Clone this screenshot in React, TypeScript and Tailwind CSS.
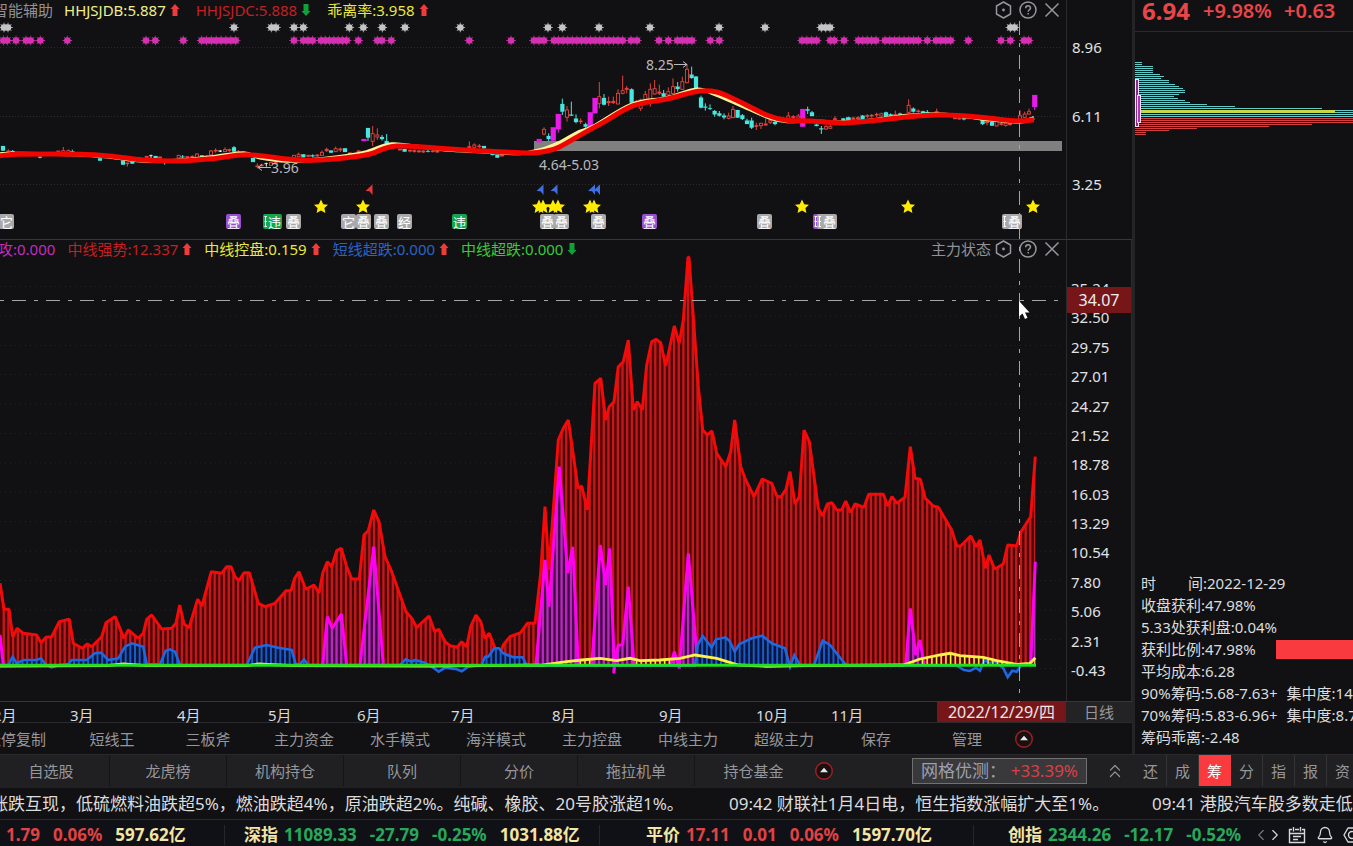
import React from 'react';
import { Bell, ChevronLeft, ChevronRight, ChevronsUp } from 'lucide-react';

type Pt = [number, number];
type Kind = 'r' | 'c' | 'm' | 'w';
type Candle = [number, number, number, number, number, Kind];

const STEP = 4.6875;
const LAST_X = 1035;
const BASE = 665;

// Series are stored in thirds of a pixel, relative to the segment origin.
const seg = (ox: number, oy: number, pts: Pt[]): Pt[] => pts.map(([x, y]) => [ox + x / 3, oy + y / 3]);

const trend: Pt[] = [
  ...seg(0, 480, [[0, 310], [12, 388], [27, 388], [38, 470], [52, 445], [70, 460], [110, 465], [123, 488], [138, 472], [155, 470], [178, 425], [208, 418], [220, 490], [247, 505], [262, 492], [275, 500], [305, 470], [318, 428], [345, 410], [372, 475], [385, 450], [415, 475], [430, 460], [440, 418], [455, 405], [485, 447], [515, 445], [528, 430], [539, 375], [552, 432], [567, 443], [593, 358], [606, 378], [634, 275], [665, 280], [680, 260], [693, 260], [705, 290], [717, 302], [732, 278], [748, 278], [775, 370], [795, 380], [825, 370], [858, 332], [873, 332], [884, 295], [897, 275], [917, 328], [942, 315], [957, 340], [968, 280], [982, 245], [995, 260], [1010, 212], [1024, 205], [1040, 260], [1055, 297], [1078, 297], [1092, 165], [1105, 152], [1121, 90], [1137, 125], [1155, 230], [1175, 275], [1218, 395], [1235, 415], [1250, 443], [1287, 408], [1304, 455], [1316, 448]]),
  ...seg(400, 240, [[135, 1205], [150, 1217], [172, 1222], [185, 1205], [200, 1220], [212, 1160], [228, 1125], [242, 1145], [255, 1195], [268, 1180], [285, 1225], [296, 1248], [310, 1215], [330, 1190], [362, 1178], [382, 1150], [405, 1150], [422, 1000], [435, 800], [447, 990], [475, 600], [490, 565], [505, 540], [534, 745], [545, 738], [562, 810], [585, 430], [602, 415], [617, 540], [628, 500], [642, 485], [655, 380], [670, 365], [685, 300], [700, 510], [712, 485], [727, 510], [740, 375], [755, 305], [768, 298], [782, 308], [797, 378], [823, 258], [838, 310], [850, 240], [864, 52], [867, 52], [895, 440], [908, 570], [922, 585], [936, 573], [950, 640], [977, 680], [992, 635], [1004, 540]]),
  ...seg(740, 400, [[2, 200], [15, 235], [42, 290], [67, 237], [95, 250], [110, 288], [122, 292], [138, 268], [150, 215], [165, 312], [178, 290], [192, 90], [208, 125], [235, 325], [248, 348], [262, 312], [276, 308], [290, 330], [305, 330], [317, 303], [332, 338], [345, 312], [372, 322], [386, 283], [430, 283], [443, 318], [456, 290], [470, 310], [495, 292], [511, 140], [525, 235], [541, 238], [556, 295], [580, 318], [595, 322], [635, 390], [650, 438], [662, 438], [692, 408], [708, 440], [720, 420], [736, 505], [747, 465], [764, 508], [790, 492], [803, 435], [830, 438], [843, 395], [872, 350], [886, 170]]),
];

const attack: Pt[][] = [
  seg(0, 480, [[0, 465], [10, 555]]),
  seg(0, 480, [[968, 555], [982, 410], [997, 445], [1024, 402], [1040, 555]]),
  seg(0, 480, [[1080, 555], [1121, 200], [1150, 555]]),
  seg(400, 240, [[408, 1275], [435, 960], [447, 1100], [478, 680], [503, 1000], [518, 920], [535, 1275]]),
  seg(400, 240, [[575, 1275], [601, 915], [617, 1035], [629, 925], [643, 1275], [641, 1300], [647, 1250], [655, 1215], [668, 1215], [685, 1040], [702, 1275]]),
  seg(400, 240, [[812, 1275], [823, 1235], [838, 1285], [865, 940], [893, 1275]]),
  seg(740, 400, [[497, 795], [511, 625], [527, 765], [540, 720], [552, 795]]),
  seg(740, 400, [[872, 795], [886, 485]]),
];

const shortDip: Pt[] = [
  ...seg(0, 480, [[0, 555], [25, 555], [38, 530], [50, 550], [70, 540], [110, 540], [123, 535], [138, 555], [155, 562], [175, 556], [205, 552], [215, 540], [260, 540], [285, 520], [303, 518], [325, 540], [355, 535], [375, 500], [395, 490], [430, 500], [440, 553], [480, 553], [497, 512], [510, 508], [525, 515], [540, 555], [740, 555], [765, 503], [800, 495], [835, 503], [875, 510], [887, 553], [900, 553], [912, 538], [925, 555], [1200, 555], [1217, 538], [1235, 545], [1245, 540], [1275, 548], [1300, 563], [1316, 575], [1335, 563]]),
  ...seg(400, 240, [[170, 1288], [185, 1294], [205, 1280], [245, 1275], [255, 1250], [265, 1250], [283, 1225], [296, 1225], [310, 1240], [340, 1252], [368, 1252], [380, 1277], [885, 1277], [893, 1215], [908, 1188], [935, 1222], [948, 1198], [977, 1192], [990, 1205], [1004, 1235], [1018, 1212]]),
  ...seg(740, 400, [[0, 732], [35, 715], [67, 707], [95, 730], [135, 745], [150, 800], [163, 765], [180, 795], [222, 795], [248, 722], [270, 735], [310, 785], [320, 796], [650, 797], [672, 810], [690, 813], [708, 803], [720, 812], [733, 780], [748, 790], [762, 782], [790, 805], [803, 832], [817, 812], [830, 815], [842, 797]]),
];

const control: Pt[] = [
  ...seg(0, 480, [[0, 558], [320, 557], [370, 552], [440, 557], [740, 557], [775, 552], [880, 557], [1280, 558]]),
  ...seg(400, 240, [[430, 1275], [500, 1265], [545, 1260], [600, 1255], [650, 1262], [690, 1255], [720, 1262], [780, 1260], [840, 1255], [885, 1245], [950, 1255], [1015, 1275], [1100, 1279]]),
  ...seg(740, 400, [[200, 797], [490, 795], [540, 777], [600, 765], [630, 760], [660, 767], [730, 772], [770, 782], [830, 793], [870, 790], [886, 773]]),
];

const candles: Candle[] = [
  ...([[9, 438, 438, 452, 452, 'c'], [25, 448, 453, 457, 457, 'r'], [38, 450, 453, 456, 457, 'c'], [120, 470, 470, 473, 475, 'c'], [175, 453, 453, 457, 457, 'r'], [190, 441, 452, 457, 460, 'r'], [205, 448, 452, 457, 457, 'r'], [217, 449, 454, 457, 457, 'c'], [300, 475, 475, 482, 482, 'c'], [369, 482, 482, 494, 494, 'c'], [382, 488, 489, 491, 500, 'r'], [397, 484, 486, 491, 491, 'c'], [440, 468, 469, 472, 474, 'r'], [453, 464, 466, 468, 474, 'w'], [467, 468, 468, 474, 474, 'c'], [480, 470, 471, 475, 475, 'r'], [494, 484, 487, 489, 494, 'c'], [536, 465, 466, 474, 476, 'r'], [548, 465, 470, 472, 475, 'c'], [562, 468, 470, 473, 475, 'r'], [577, 466, 469, 472, 474, 'r'], [591, 460, 462, 472, 472, 'r'], [606, 466, 466, 472, 472, 'c'], [620, 465, 468, 471, 472, 'r'], [633, 450, 453, 465, 467, 'r'], [647, 445, 451, 453, 458, 'r'], [661, 450, 452, 455, 456, 'w'], [675, 442, 449, 455, 456, 'r'], [688, 446, 449, 451, 456, 'r'], [702, 438, 442, 455, 458, 'c'], [715, 450, 455, 458, 459, 'r'], [759, 474, 474, 486, 486, 'c'], [772, 490, 498, 500, 505, 'r'], [785, 491, 495, 497, 500, 'r'], [799, 488, 490, 492, 500, 'w'], [813, 486, 488, 496, 497, 'r'], [827, 485, 487, 490, 492, 'r'], [882, 465, 466, 474, 474, 'r'], [896, 458, 463, 470, 472, 'r'], [910, 463, 463, 472, 472, 'c'], [925, 464, 466, 469, 472, 'r'], [938, 463, 466, 469, 472, 'c'], [952, 462, 465, 468, 470, 'r'], [966, 452, 457, 466, 468, 'r'], [980, 443, 448, 452, 456, 'r'], [993, 450, 452, 458, 458, 'c'], [1007, 440, 446, 455, 456, 'r'], [1021, 443, 447, 450, 456, 'r'], [1035, 445, 445, 456, 456, 'c'], [1050, 457, 459, 462, 463, 'r'], [1076, 450, 453, 456, 457, 'r'], [1092, 417, 417, 423, 423, 'm'], [1104, 384, 384, 413, 423, 'c'], [1118, 378, 401, 424, 438, 'r'], [1132, 385, 405, 411, 420, 'r'], [1146, 405, 411, 417, 422, 'c'], [1160, 402, 423, 430, 432, 'c'], [1200, 446, 447, 450, 450, 'r'], [1214, 447, 447, 455, 455, 'c'], [1230, 448, 451, 453, 457, 'r'], [1243, 448, 452, 454, 458, 'r'], [1257, 449, 453, 455, 459, 'r'], [1270, 450, 453, 456, 459, 'r'], [1284, 450, 453, 455, 457, 'c'], [1298, 450, 453, 455, 457, 'r'], [1312, 451, 454, 456, 458, 'r']] as Candle[]),
  ...([[58, 424, 440, 443, 443, 'r'], [73, 430, 435, 442, 443, 'r'], [88, 432, 438, 440, 444, 'r'], [102, 438, 438, 445, 445, 'c'], [128, 460, 461, 465, 466, 'c'], [142, 464, 464, 473, 473, 'c'], [156, 463, 464, 468, 469, 'r'], [268, 417, 417, 427, 427, 'm'], [282, 382, 388, 402, 406, 'r'], [296, 400, 408, 417, 423, 'c'], [310, 382, 382, 422, 422, 'm'], [325, 342, 342, 388, 398, 'm'], [337, 296, 312, 335, 345, 'c'], [351, 318, 330, 352, 365, 'r'], [364, 305, 344, 347, 348, 'c'], [378, 343, 356, 366, 370, 'c'], [392, 355, 363, 365, 372, 'r'], [407, 368, 373, 380, 383, 'c'], [421, 337, 337, 382, 382, 'm'], [435, 294, 294, 340, 340, 'm'], [448, 246, 290, 310, 325, 'r'], [462, 282, 294, 314, 316, 'c'], [476, 290, 305, 308, 318, 'r'], [490, 290, 304, 308, 312, 'r'], [504, 268, 280, 312, 312, 'r'], [518, 227, 272, 280, 283, 'r'], [530, 258, 265, 268, 280, 'r'], [545, 265, 268, 308, 312, 'c'], [560, 300, 304, 309, 312, 'r'], [572, 296, 300, 325, 333, 'r'], [586, 273, 283, 305, 306, 'r'], [601, 250, 268, 300, 320, 'r'], [614, 240, 266, 282, 284, 'r'], [628, 254, 276, 280, 285, 'r'], [641, 270, 280, 290, 290, 'c'], [655, 262, 275, 285, 288, 'r'], [669, 235, 260, 280, 282, 'r'], [683, 246, 260, 267, 275, 'c'], [697, 230, 245, 268, 270, 'r'], [711, 192, 208, 248, 250, 'r'], [725, 200, 224, 234, 236, 'c'], [738, 228, 230, 265, 266, 'c'], [753, 287, 293, 323, 325, 'c'], [766, 310, 320, 323, 332, 'c'], [780, 313, 325, 327, 330, 'c'], [794, 330, 333, 343, 350, 'c'], [808, 333, 340, 347, 350, 'c'], [822, 340, 347, 352, 358, 'c'], [836, 338, 348, 355, 358, 'r'], [849, 318, 328, 353, 354, 'r'], [863, 330, 330, 353, 353, 'c'], [877, 342, 346, 357, 360, 'c'], [891, 356, 362, 372, 372, 'c'], [905, 353, 362, 383, 387, 'c'], [919, 368, 377, 379, 390, 'r'], [933, 368, 370, 377, 387, 'r'], [947, 355, 372, 375, 377, 'r'], [961, 356, 362, 367, 372, 'r'], [975, 363, 366, 372, 376, 'c'], [1015, 336, 348, 355, 356, 'r'], [1030, 345, 350, 354, 356, 'r'], [1045, 342, 348, 354, 356, 'r'], [1058, 327, 327, 380, 380, 'm'], [1073, 320, 328, 332, 342, 'c'], [1086, 333, 337, 348, 349, 'c'], [1100, 372, 374, 378, 379, 'c'], [1114, 378, 385, 388, 402, 'c'], [1128, 374, 380, 387, 390, 'r'], [1141, 372, 380, 385, 387, 'r'], [1155, 348, 356, 358, 361, 'r'], [1195, 352, 353, 360, 361, 'c']] as Candle[]).map(([x, h, t, b, l, k]): Candle => [x + 1350, h, t, b, l, k]),
  ...([[10, 355, 355, 362, 362, 'c'], [25, 350, 353, 360, 361, 'c'], [40, 350, 354, 358, 360, 'r'], [54, 348, 353, 356, 360, 'r'], [68, 345, 347, 358, 360, 'c'], [82, 342, 347, 349, 354, 'r'], [95, 342, 346, 348, 353, 'r'], [110, 338, 343, 345, 351, 'r'], [124, 338, 341, 348, 352, 'r'], [138, 335, 337, 352, 353, 'c'], [152, 340, 343, 348, 350, 'c'], [166, 332, 343, 346, 348, 'r'], [180, 338, 341, 344, 347, 'c'], [206, 298, 316, 337, 340, 'r'], [220, 322, 326, 335, 338, 'c'], [235, 328, 333, 335, 338, 'r'], [249, 332, 334, 340, 340, 'c'], [262, 330, 336, 340, 341, 'c'], [290, 326, 335, 338, 340, 'r'], [345, 350, 353, 356, 358, 'r'], [358, 350, 354, 357, 359, 'r'], [372, 352, 354, 358, 361, 'c'], [428, 358, 360, 372, 375, 'c'], [441, 362, 365, 368, 376, 'r'], [456, 364, 366, 377, 378, 'c'], [470, 362, 363, 378, 379, 'r'], [484, 366, 371, 373, 377, 'r'], [497, 368, 370, 376, 380, 'r'], [510, 365, 371, 374, 377, 'r'], [540, 330, 347, 358, 360, 'r'], [554, 335, 342, 352, 354, 'r'], [567, 326, 335, 342, 344, 'r'], [584, 285, 285, 321, 330, 'm']] as Candle[]).map(([x, h, t, b, l, k]): Candle => [x + 2520, h, t, b, l, k]),
];

const maSlow: Pt[] = [
  ...seg(0, 0, [[0, 467], [60, 463], [240, 463], [330, 468], [430, 480], [540, 483], [640, 476], [740, 464], [870, 478], [940, 481], [1040, 473], [1110, 462], [1190, 438], [1350, 447]]),
  ...seg(450, 0, [[120, 454], [240, 459], [290, 453], [330, 440], [400, 400], [460, 367], [550, 317], [650, 297], [745, 274], [800, 276], [860, 301], [950, 345], [1010, 361], [1080, 363]]),
  ...seg(840, 0, [[0, 369], [100, 362], [200, 351], [290, 345], [380, 348], [450, 355], [540, 363], [582, 359]]),
];

const maFast: Pt[] = [
  ...seg(0, 0, [[0, 462], [60, 461], [240, 464], [330, 471], [430, 483], [540, 481], [640, 470], [730, 459], [780, 473], [860, 483], [940, 479], [1040, 467], [1100, 456], [1160, 434], [1200, 434], [1350, 450]]),
  ...seg(450, 0, [[120, 456], [210, 460], [270, 450], [330, 427], [380, 399], [430, 379], [545, 313], [650, 294], [740, 268], [800, 285], [870, 315], [960, 354], [1010, 364], [1080, 363]]),
  ...seg(840, 0, [[0, 367], [100, 360], [200, 347], [290, 342], [380, 350], [450, 359], [540, 366], [582, 353]]),
];

const run = (a: number, b: number): number[] => {
  const n = Math.max(1, Math.round((b - a) / 14));
  return Array.from({ length: n + 1 }, (_, i) => a + ((b - a) * i) / n);
};

const grayMarks = [12, 24, 702, 814, 828, 882, 910, 1048, 1090, 1147, 1215, 1381, 1644, 1687, 1797, 1950, 2157, 2295, 2464, 2477, 2490, 3031, 3044].map((v) => v / 3);

const pinkMarks = [
  10, 22, 48, 78, 92, 121, 202, 438, 466, 550, ...run(605, 707), 882, ...run(910, 938), ...run(963, 1040), 1075, 1132, 1146, 1174, 1408, 1533,
  ...run(1602, 1632), ...run(1662, 1868), 1893, 1911, 1977, 2005, ...run(2032, 2076), 2131, 2158, ...run(2406, 2450), 2491, 2503, 2532,
  ...run(2575, 2628), ...run(2655, 2755), 2782, ...run(2808, 2852), 2905, 3003, 3031, 3072, 3086,
].map((v) => v / 3);

const starXs = [321, 363, 539, 543, 553, 558, 590, 594, 802, 908, 1033];

const GRAY = '#a9a9ab';
const PURPLE = '#9a4fd0';
const GREEN = '#17a350';

// A badge without a label is tucked behind its right-hand neighbour.
const badges: { x: number; t?: string; fill: string }[] = [
  { x: 6, t: '它', fill: GRAY },
  { x: 233, t: '叠', fill: PURPLE },
  { x: 270, fill: GREEN },
  { x: 274, t: '违', fill: GREEN },
  { x: 293, t: '叠', fill: GRAY },
  { x: 348, t: '它', fill: GRAY },
  { x: 363, t: '叠', fill: GRAY },
  { x: 381, t: '叠', fill: GRAY },
  { x: 404, t: '经', fill: GRAY },
  { x: 459, t: '违', fill: GREEN },
  { x: 547, t: '叠', fill: GRAY },
  { x: 561, t: '叠', fill: GRAY },
  { x: 598, t: '叠', fill: GRAY },
  { x: 649, t: '叠', fill: PURPLE },
  { x: 764, t: '叠', fill: GRAY },
  { x: 820, fill: PURPLE },
  { x: 824, fill: GRAY },
  { x: 829, t: '叠', fill: GRAY },
  { x: 1009, fill: GRAY },
  { x: 1014, t: '叠', fill: GRAY },
];

const kindColor: Record<Kind, string> = { r: '#e0453f', c: '#45e8e0', m: '#e81be8', w: '#f0f0f0' };

const poly = (pts: Pt[]) => pts.map(([x, y]) => `${x.toFixed(1)},${y.toFixed(1)}`).join(' ');
const area = (pts: Pt[]) => `${pts[0][0]},${BASE} ${poly(pts)} ${pts[pts.length - 1][0]},${BASE}`;

const smooth = (p: Pt[]) => {
  let d = `M${p[0][0]} ${p[0][1]}`;
  for (let i = 0; i < p.length - 1; i++) {
    const a = p[Math.max(0, i - 1)];
    const b = p[i];
    const c = p[i + 1];
    const e = p[Math.min(p.length - 1, i + 2)];
    d += `C${b[0] + (c[0] - a[0]) / 6} ${b[1] + (c[1] - a[1]) / 6} ${c[0] - (e[0] - b[0]) / 6} ${c[1] - (e[1] - b[1]) / 6} ${c[0]} ${c[1]}`;
  }
  return d;
};

const barXs = Array.from({ length: 221 }, (_, i) => LAST_X - i * STEP);

function Burst({ x, y, color }: { x: number; y: number; color: string }) {
  return (
    <g transform={`translate(${x} ${y})`} stroke={color} strokeWidth="1">
      <circle r="3.3" fill={color} stroke="none" />
      <path d="M-4.800 0H4.800M0-4.800V4.800M-3.400-3.400L3.400 3.400M-3.400 3.400L3.400-3.400" strokeOpacity="0.8" />
    </g>
  );
}

function PriceChart() {
  return (
    <svg viewBox="0 21 1066 218" preserveAspectRatio="xMaxYMid meet" className="block h-[218px] w-full" aria-label="K线图">
      {[47, 116, 184].map((y) => (
        <line key={y} x1="0" x2="1062" y1={y + 0.5} y2={y + 0.5} stroke="#2b2b2e" strokeDasharray="1 2" />
      ))}
      {grayMarks.map((x) => (
        <Burst key={x} x={x} y={27.5} color="#c4c4c6" />
      ))}
      {pinkMarks.map((x) => (
        <Burst key={x} x={x} y={40.5} color="#d631b2" />
      ))}
      <rect x="534" y="141" width="528" height="10" fill="#808080" />
      {candles.map(([x, h, t, b, l, k], i) => {
        const c = kindColor[k];
        const cx = x / 3;
        const hollow = k === 'r' && b - t > 4;
        const w = k === 'm' ? 5 : k === 'c' ? 4 : 3;
        return (
          <g key={i} stroke={c} strokeWidth="1">
            <line x1={cx} x2={cx} y1={h / 3} y2={hollow ? t / 3 : l / 3} />
            {hollow && <line x1={cx} x2={cx} y1={b / 3} y2={l / 3} />}
            <rect x={cx - w / 2} y={t / 3} width={w} height={Math.max(0.4, (b - t) / 3)} fill={hollow ? 'none' : c} strokeWidth={k === 'r' ? 0.9 : 0.2} />
          </g>
        );
      })}
      <path d={smooth(maFast)} fill="none" stroke="#fff39a" strokeWidth="3.6" />
      <path d={smooth(maSlow)} fill="none" stroke="#f00500" strokeWidth="5" />
      <g fill="#b9b9bb" fontSize="14" fontFamily="'Noto Sans', sans-serif">
        <text x="646" y="70">8.25</text>
        <text x="271" y="173">3.96</text>
        <text x="539" y="170">4.64-5.03</text>
      </g>
      <path d="M674 64.500H687M683 61.500L687 64.500L683 67.500M271 167.500H258M262 164.500L258 167.500L262 170.500" fill="none" stroke="#b9b9bb" />
      <path d="M372.500 184.500V195L369.500 191.300L365.500 191Z" fill="#e23a3a" />
      {[543.5, 557.5, 595, 600].map((x) => (
        <path key={x} d={`M${x} 184.500V195L${x - 3} 191.300L${x - 7} 191Z`} fill="#3f6fe0" />
      ))}
      {starXs.map((x) => (
        <path
          key={x}
          transform={`translate(${x} 206.500)`}
          d="M0-7L2.200-2.300L7-1.800L3.400 1.600L4.400 6.500L0 4.100L-4.400 6.500L-3.400 1.600L-7-1.800L-2.200-2.300Z"
          fill="#ffec00"
        />
      ))}
      {badges.map(({ x, t, fill }, i) => (
        <g key={i}>
          <rect x={x - 7} y="214" width="15" height="15" rx="2" fill={fill} />
          {t ? (
            <text x={x + 0.5} y="226.500" fill="#fff" fontSize="13" textAnchor="middle" fontFamily="'Noto Sans CJK SC', sans-serif">
              {t}
            </text>
          ) : (
            <path d={`M${x - 4.5} 216.500V226.500M${x - 5.5} 216.500H${x - 3}M${x - 5.5} 221.500H${x - 3}M${x - 5.5} 226.500H${x - 3}`} stroke="#fff" />
          )}
        </g>
      ))}
    </svg>
  );
}

function ForceChart() {
  const attackAll = attack.map(area);
  return (
    <svg viewBox="0 259 1066 442" preserveAspectRatio="none" className="block h-full w-full overflow-visible" aria-label="主力状态">
      <defs>
        <clipPath id="trendClip"><polygon points={area(trend)} /></clipPath>
        <clipPath id="attackClip">{attackAll.map((p, i) => <polygon key={i} points={p} />)}</clipPath>
        <clipPath id="dipClip"><polygon points={area(shortDip)} /></clipPath>
        <clipPath id="controlClip"><polygon points={area(control)} /></clipPath>
      </defs>
      {Array.from({ length: 14 }, (_, i) => 286.5 + i * 29.4).map((y) => (
        <line key={y} x1="0" x2="1062" y1={y} y2={y} stroke="#252528" strokeDasharray="1 4" />
      ))}
      <polygon points={area(trend)} fill="#4c0204" />
      <g clipPath="url(#trendClip)" stroke="#c01a1c" strokeWidth="2.4">
        {barXs.map((x) => <line key={x} x1={x} x2={x} y1="250" y2={BASE} />)}
      </g>
      <polyline points={poly(trend)} fill="none" stroke="#f50a0a" strokeWidth="3" strokeLinejoin="bevel" />
      {attackAll.map((p, i) => <polygon key={i} points={p} fill="#450047" />)}
      <g clipPath="url(#attackClip)" stroke="#b52bb8" strokeWidth="2.400">
        {barXs.map((x) => <line key={x} x1={x} x2={x} y1="400" y2={BASE} />)}
      </g>
      {attack.map((p, i) => (
        <polyline key={i} points={poly(p)} fill="none" stroke="#ff00f2" strokeWidth="3" strokeLinejoin="bevel" />
      ))}
      <polygon points={area(shortDip)} fill="#06163f" />
      <g clipPath="url(#dipClip)" stroke="#1d5cc4" strokeWidth="2">
        {barXs.map((x) => <line key={x} x1={x} x2={x} y1="620" y2={BASE} />)}
      </g>
      <polyline points={poly(shortDip)} fill="none" stroke="#1f68dd" strokeWidth="2.600" />
      <g clipPath="url(#controlClip)" stroke="#f6f03c" strokeWidth="1.400">
        {barXs.filter((x) => (x > 578 && x < 592) || (x > 635 && x < 672) || x > 920).map((x) => <line key={x} x1={x} x2={x} y1="640" y2={BASE} />)}
      </g>
      <polyline points={poly(control)} fill="none" stroke="#fff04a" strokeWidth="2.800" />
      <line x1="0" x2="1036" y1="665.300" y2="665.300" stroke="#22dd22" strokeWidth="3" />
    </svg>
  );
}

function Arrow({ up }: { up: boolean }) {
  return (
    <svg width="10" height="12" viewBox="0 0 10 12" className="shrink-0" aria-hidden="true">
      {up ? <path d="M5 0L9.500 5H7.500V12H2.500V5H.5Z" fill="#f03a3c" /> : <path d="M5 12L9.500 7H7.500V0H2.500V7H.5Z" fill="#12a03a" />}
    </svg>
  );
}

function PanelTools() {
  return (
    <div className="flex items-center gap-[7px] text-[#97979b]">
      <button aria-label="设置">
        <svg width="17" height="18" viewBox="0 0 17 18" fill="none" stroke="currentColor" strokeWidth="1.500">
          <path d="M8.500 1L15.500 5V13L8.500 17L1.500 13V5Z" strokeLinejoin="round" />
          <circle cx="8.500" cy="9" r="1.400" fill="currentColor" stroke="none" />
        </svg>
      </button>
      <button aria-label="帮助">
        <svg width="18" height="18" viewBox="0 0 18 18" fill="none" stroke="currentColor" strokeWidth="1.500">
          <circle cx="9" cy="9" r="8" />
          <path d="M6.700 7.200C6.700 4 11.500 4 11.500 7C11.500 8.700 9.200 8.800 9.200 10.800M9.200 12V13.600" />
        </svg>
      </button>
      <button aria-label="关闭">
        <svg width="16" height="18" viewBox="0 0 16 18" fill="none" stroke="currentColor" strokeWidth="1.500">
          <path d="M1.500 2.500L14.500 15.500M14.500 2.500L1.500 15.500" />
        </svg>
      </button>
    </div>
  );
}

function Value({ text, color, up }: { text: string; color: string; up?: boolean }) {
  return (
    <span className={`flex items-center gap-1 whitespace-nowrap ${color}`}>
      {text}
      {up !== undefined && <Arrow up={up} />}
    </span>
  );
}

function RoundUp() {
  return (
    <button aria-label="展开" className="flex">
      <svg width="20" height="20" viewBox="0 0 20 20">
        <circle cx="10" cy="10" r="8.300" fill="#1a1012" stroke="#a02024" strokeWidth="1.400" />
        <path d="M10 6.800L14 11.300H6Z" fill="#e6e6e6" />
      </svg>
    </button>
  );
}

const months: [string, string][] = [
  ['2月', 'w-[77px]'],
  ['3月', 'w-[107px]'],
  ['4月', 'w-[91px]'],
  ['5月', 'w-[89px]'],
  ['6月', 'w-[94px]'],
  ['7月', 'w-[101px]'],
  ['8月', 'w-[107px]'],
  ['9月', 'w-[97px]'],
  ['10月', 'w-[75px]'],
  ['11月', 'flex-1'],
];

const forceScale = ['35.24', '32.50', '29.75', '27.01', '24.27', '21.52', '18.78', '16.03', '13.29', '10.54', '7.80', '5.06', '2.31', '-0.43'];
const templates = ['涨停复制', '短线王', '三板斧', '主力资金', '水手模式', '海洋模式', '主力控盘', '中线主力', '超级主力'];
const pages = ['自选股', '龙虎榜', '机构持仓', '队列', '分价', '拖拉机单', '持仓基金'];
const sideTabs = ['还', '成', '筹', '分', '指', '报', '资'];

const chips: [number, string][] = [
  ...[7, 7, 18, 18, 18, 18, 25, 29, 26, 34, 34, 40, 44, 48, 50, 50, 44, 39, 43, 50, 55, 72, 100, 187, 218, 218, 218, 218].map((w): [number, string] => [w, '#63c9c8']),
  ...[218, 218, 218, 177, 134, 62, 34, 11, 11].map((w): [number, string] => [w, '#d3403f']),
];

function ChipChart() {
  return (
    <svg viewBox="0 32 218 110" preserveAspectRatio="xMinYMin meet" className="block h-[110px] w-full" aria-label="筹码分布">
      {chips.map(([w, c], i) => (
        <rect key={i} x="0" y={62 + i * 2} width={w} height="1" fill={c} />
      ))}
      <rect x="0" y="110" width="200" height="3" fill="#c9d648" />
      <rect x="0.500" y="79.500" width="3" height="47" fill="#8a2a8e" stroke="#f3dff3" />
      <rect x="2.500" y="95.500" width="3" height="27" fill="#b235b6" stroke="#f3dff3" />
    </svg>
  );
}

type IndexCell = [string, string];
const indices: { width: string; cells: IndexCell[] }[] = [
  { width: 'w-[225px] pl-[6px]', cells: [['1.79', 'text-[#e04343]'], ['0.06%', 'text-[#e04343]'], ['597.62亿', 'text-[#f3e5a4]']] },
  { width: 'w-[375px] pl-[19px]', cells: [['深指', 'text-[#f3e5a4]'], ['11089.33', 'text-[#27a85b]'], ['-27.79', 'text-[#27a85b]'], ['-0.25%', 'text-[#27a85b]'], ['1031.88亿', 'text-[#f3e5a4]']] },
  { width: 'w-[374px] pl-[46px]', cells: [['平价', 'text-[#f3e5a4]'], ['17.11', 'text-[#e04343]'], ['0.01', 'text-[#e04343]'], ['0.06%', 'text-[#e04343]'], ['1597.70亿', 'text-[#f3e5a4]']] },
];
const lastIndex: IndexCell[] = [['创指', 'text-[#f3e5a4]'], ['2344.26', 'text-[#27a85b]'], ['-12.17', 'text-[#27a85b]'], ['-0.52%', 'text-[#27a85b]']];

function Cells({ cells }: { cells: IndexCell[] }) {
  return (
    <>
      {cells.map(([t, c], i) => (
        <span key={i} className={`whitespace-nowrap ${c} ${i === 0 && cells.length > 3 ? '-mr-[7px]' : ''}`}>
          {t}
        </span>
      ))}
    </>
  );
}

export default function App() {
  return (
    <div className="flex h-screen min-h-[640px] flex-col overflow-hidden bg-[#111113] font-['Noto_Sans','Noto_Sans_CJK_SC',sans-serif] text-[15px] leading-5 text-[#dcdcde]">
      <div className="flex min-h-0 flex-1">
        <main className="flex min-w-0 flex-1 flex-col">
          <div className="relative flex min-h-0 flex-1 flex-col">
            <section className="flex h-[239px] shrink-0">
              <div className="min-w-0 flex-1">
                <header className="flex h-[21px] items-center justify-between pr-[6px] pb-[2px]">
                  <div className="-ml-[7px] flex items-center gap-4">
                    <span className="-mr-[5px] whitespace-nowrap text-[#929296]">智能辅助</span>
                    <Value text="HHJSJDB:5.887" color="text-[#eeee8c]" up />
                    <Value text="HHJSJDC:5.888" color="text-[#c41f22]" up={false} />
                    <Value text="乖离率:3.958" color="text-[#ebe83c]" up />
                  </div>
                  <PanelTools />
                </header>
                <PriceChart />
              </div>
              <div className="flex w-[66px] shrink-0 flex-col justify-between border-l border-[#2b2b2e] pt-[37px] pb-[45px] pl-[5px] text-[#e2e2e4]">
                <span>8.96</span>
                <span>6.11</span>
                <span>3.25</span>
              </div>
            </section>

            <section className="flex min-h-0 flex-1 border-y border-[#37373a]">
              <div className="flex min-w-0 flex-1 flex-col">
                <header className="flex h-[19px] shrink-0 items-center justify-between pr-[6px] pb-[2px]">
                  <div className="-ml-[2px] flex items-center gap-3">
                    <Value text="攻:0.000" color="text-[#c32bc3]" />
                    <Value text="中线强势:12.337" color="text-[#c41f22]" up />
                    <Value text="中线控盘:0.159" color="text-[#ebe83c]" up />
                    <Value text="短线超跌:0.000" color="text-[#2c63c8]" up />
                    <Value text="中线超跌:0.000" color="text-[#3bc93b]" up={false} />
                  </div>
                  <div className="flex items-center gap-1">
                    <Value text="主力状态" color="text-[#929296]" />
                    <PanelTools />
                  </div>
                </header>
                <div className="min-h-0 flex-1">
                  <ForceChart />
                </div>
              </div>
              <div className="relative flex w-[66px] shrink-0 flex-col justify-between border-x border-[#2b2b2e] pt-[38px] pb-[21px] pl-[4px] text-[#e2e2e4]">
                {forceScale.map((v) => (
                  <span key={v}>{v}</span>
                ))}
                <span className="absolute inset-x-0 top-[47px] flex h-[26px] items-center justify-center bg-[#761619] text-base text-[#eee]">34.07</span>
              </div>
            </section>

            <svg viewBox="0 0 1132 702" preserveAspectRatio="none" className="pointer-events-none absolute inset-0 h-full w-full" aria-hidden="true">
              <path d="M0 300.500H1058" stroke="#a5a5a8" strokeDasharray="14 8 4 8" strokeDashoffset="22" />
              <path d="M1019.500 21V702" stroke="#a5a5a8" strokeDasharray="14 8 4 8" />
              <path d="M1019 301V316.500L1022.500 313.500L1025 319L1027.500 317.800L1025 312.500H1029.500Z" fill="#fff" />
            </svg>
          </div>

          <div className="flex h-[21px] shrink-0 items-center border-b border-[#2b2b2e]">
            <div className="-ml-[7px] flex min-w-0 flex-1 pt-[6px] text-[#dadadc]">
              {months.map(([m, w]) => (
                <span key={m} className={`shrink-0 ${w}`}>{m}</span>
              ))}
            </div>
            <span className="flex h-full w-[129px] items-center justify-center bg-[#761619] text-base text-[#f0e4e4]">2022/12/29/四</span>
            <button className="flex h-full w-[66px] items-center justify-center bg-[#232326] text-[#97979b]">日线</button>
          </div>

          <nav className="-ml-8 flex h-[31px] shrink-0 items-center text-[#97979b]">
            {templates.map((t) => (
              <button key={t} className="w-24 shrink-0">{t}</button>
            ))}
            <button className="w-[88px] shrink-0">保存</button>
            <button className="w-[94px] shrink-0">管理</button>
            <RoundUp />
          </nav>
        </main>

        <aside className="flex w-[221px] shrink-0 flex-col overflow-hidden border-l-[3px] border-[#242427]">
          <header className="flex h-[32px] items-center border-b border-[#2b2b2e] pb-[10px] pl-[7px] font-bold whitespace-nowrap text-[#ea4549]">
            <span className="w-[61px] text-2xl">6.94</span>
            <span className="w-[81px] text-xl font-semibold">+9.98%</span>
            <span className="text-xl font-semibold">+0.63</span>
          </header>
          <ChipChart />
          <div className="flex-1" />
          <dl className="pb-[6px] pl-[6px] whitespace-nowrap">
            <div className="flex h-[22px] items-center">
              <dt className="flex w-[62px] justify-between"><span>时</span><span>间</span></dt>
              <dd>:2022-12-29</dd>
            </div>
            <div className="flex h-[22px] items-center"><dt>收盘获利:</dt><dd>47.98%</dd></div>
            <div className="flex h-[22px] items-center"><dt>5.33处获利盘:</dt><dd>0.04%</dd></div>
            <div className="flex h-[22px] items-center">
              <dt>获利比例:</dt>
              <dd className="w-[71px]">47.98%</dd>
              <dd className="h-[19px] flex-1 bg-[#f93a3e]" />
            </div>
            <div className="flex h-[22px] items-center"><dt>平均成本:</dt><dd>6.28</dd></div>
            <div className="flex h-[22px] items-center"><dt>90%筹码:</dt><dd className="flex gap-[9px]"><span>5.68-7.63+</span><span>集中度:14.67%</span></dd></div>
            <div className="flex h-[22px] items-center"><dt>70%筹码:</dt><dd className="flex gap-[9px]"><span>5.83-6.96+</span><span>集中度:8.78%</span></dd></div>
            <div className="flex h-[22px] items-center"><dt>筹码乖离:</dt><dd>-2.48</dd></div>
          </dl>
        </aside>
      </div>

      <nav className="flex h-[34px] shrink-0 items-start border-t border-[#2a2a2d] bg-[#202023] text-[#97979b]">
        <div className="-ml-[7px] flex min-w-0 flex-1 items-center">
          {pages.map((p, i) => (
            <button key={p} className={`h-[31px] w-[117px] shrink-0 border-[#151517] ${i < pages.length - 1 ? 'border-r' : ''}`}>{p}</button>
          ))}
          <span className="ml-[2px]"><RoundUp /></span>
        </div>
        <a href="#grid" className="mt-[3px] flex h-[26px] w-[175px] shrink-0 items-center justify-between border border-[#707073] bg-[#39393c] px-2 text-[17px] text-[#9c9fae]">
          网格优测：<span className="text-[#dc4044]">+33.39%</span>
        </a>
        <button aria-label="收起" className="flex h-[31px] w-12 shrink-0 items-center justify-center pl-2"><ChevronsUp size={22} strokeWidth={1.300} /></button>
        <div className="flex w-[218px] shrink-0 overflow-hidden">
          {sideTabs.map((t) => (
            <button key={t} className={`h-[31px] w-8 shrink-0 border-r ${t === '筹' ? 'border-[#f93a3e] bg-[#f93a3e] text-white' : 'border-[#343437]'}`}>{t}</button>
          ))}
        </div>
      </nav>

      <div className="flex h-[32px] shrink-0 items-center overflow-hidden border-b border-[#2b2b2e] text-[17px] whitespace-nowrap">
        <span className="-ml-[9px] w-[738px] shrink-0">涨跌互现，低硫燃料油跌超5%，燃油跌超4%，原油跌超2%。纯碱、橡胶、20号胶涨超1%。</span>
        <span className="w-[423px] shrink-0">09:42 财联社1月4日电，恒生指数涨幅扩大至1%。</span>
        <span className="shrink-0">09:41 港股汽车股多数走低</span>
      </div>

      <footer className="flex h-[26px] shrink-0 items-center overflow-hidden bg-[#101017] pt-[3px] text-[17px] font-bold">
        {indices.map(({ width, cells }, i) => (
          <div key={i} className={`flex h-5 shrink-0 items-center gap-[13px] border-r border-[#27272b] ${width}`}>
            <Cells cells={cells} />
          </div>
        ))}
        <div className="flex shrink-0 items-center gap-[13px] pl-[34px]">
          <Cells cells={lastIndex} />
        </div>
        <div className="ml-[11px] flex shrink-0 items-center text-[#d8d8da]">
          <button aria-label="上一个" className="w-[14px] text-[#77777b]"><ChevronLeft size={18} strokeWidth={1.500} /></button>
          <button aria-label="下一个" className="w-[22px]"><ChevronRight size={18} strokeWidth={1.500} /></button>
          <button aria-label="日历" className="w-[28px]">
            <svg width="18" height="18" viewBox="0 0 18 18" fill="none" stroke="currentColor" strokeWidth="1.400">
              <path d="M4 3.500H1.500V16.500H16.500V3.500H14M7 3.500H11M1.500 7.500H16.500M5.500 1V5.500M12.500 1V5.500M5 10.500H13M5 13.500H10" />
            </svg>
          </button>
          <button aria-label="提醒" className="w-[27px]"><Bell size={18} strokeWidth={1.700} /></button>
          <button aria-label="设置">
            <svg width="18" height="18" viewBox="0 0 18 18" fill="none" stroke="currentColor" strokeWidth="1.400">
              <path d="M5 2H13L17 9L13 16H5L1 9Z" strokeLinejoin="round" />
              <circle cx="9" cy="9" r="3.500" />
            </svg>
          </button>
        </div>
      </footer>
    </div>
  );
}
